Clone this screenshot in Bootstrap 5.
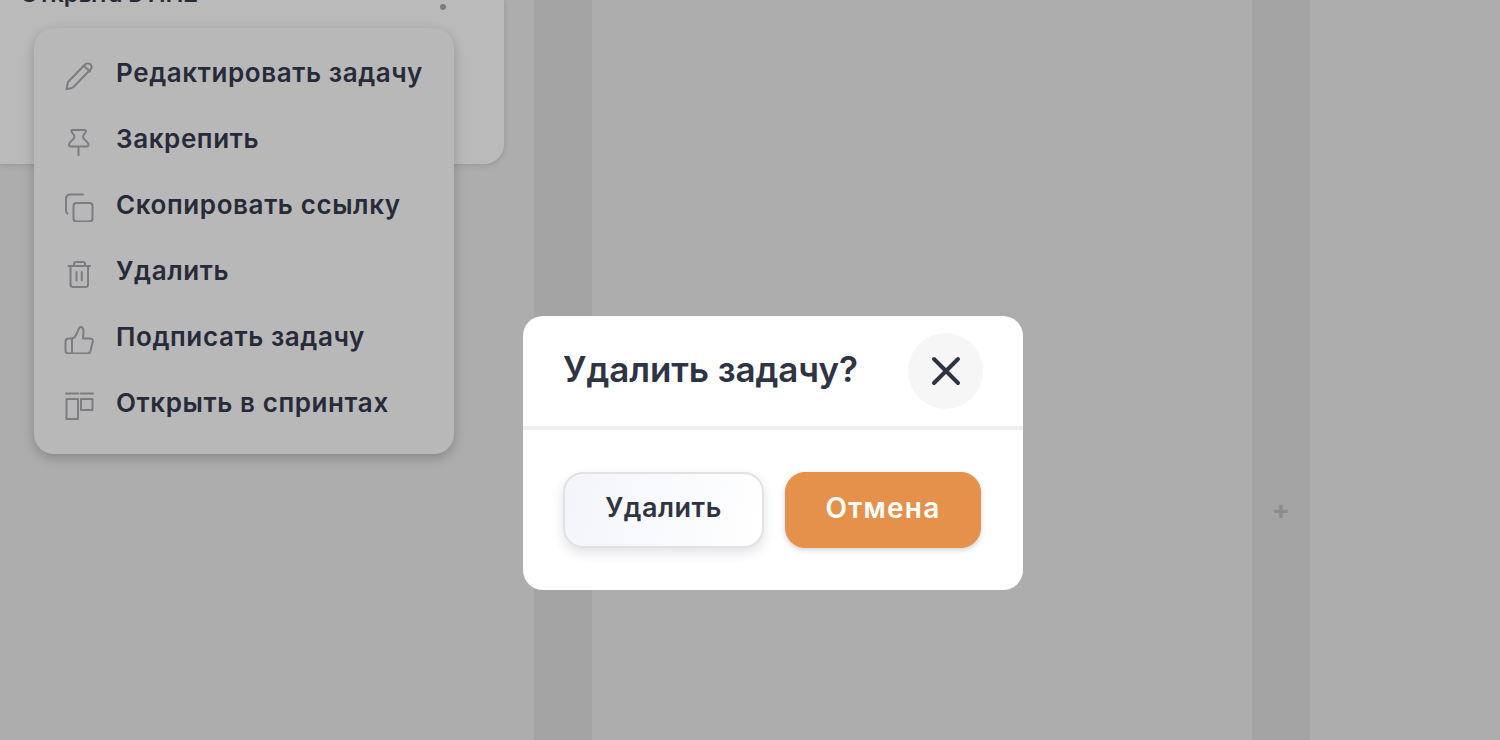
<!DOCTYPE html>
<html lang="ru">
  <head>
    <meta charset="UTF-8" />
    <title>Удалить задачу?</title>
    <link href="https://cdn.jsdelivr.net/npm/bootstrap@5.3.0/dist/css/bootstrap.min.css" rel="stylesheet" />
    <style>
      html, body { height: 100%; overflow: hidden; }
      body {
        background: #adadad;
        font-family: Inter, "Noto Sans", sans-serif;
        color: #272b39;
      }
      .board { height: 740px; }
      .board-first { width: 534px; }
      .board-strip { width: 58px; background: #a4a4a4; }
      .board-mid { width: 660px; }
      .task-panel {
        width: 504px;
        height: 164px;
        background: #bababa;
        border-bottom-right-radius: 20px;
        box-shadow: 0 1px 6px rgba(0,0,0,.14);
        position: relative;
      }
      .task-title {
        position: absolute;
        left: 20px;
        top: -19px;
        font-size: 24px;
        font-weight: 600;
        letter-spacing: -.15px;
        line-height: 26px;
        white-space: nowrap;
      }
      .task-dot {
        position: absolute;
        left: 440px;
        top: 4px;
        width: 6px;
        height: 6px;
        border-radius: 50%;
        background: #7d7d80;
      }
      .plus-mark { color: #8c8c8c; font-size: 27px; font-weight: 700; line-height: 1; margin-top: 496px; height: 27px; }
      .ctx-menu {
        position: absolute;
        left: 34px;
        top: 28px;
        width: 420px;
        height: 426px;
        padding-top: 13px;
        background: #b8b8b8;
        border-radius: 20px;
        box-shadow: 0 4px 12px rgba(0,0,0,.22);
      }
      .ctx-item {
        height: 66px;
        padding-left: 30px;
        gap: 21px;
        font-size: 26px;
        font-weight: 600;
        letter-spacing: .6px;
        white-space: nowrap;
      }
      .ctx-text { margin-top: -3px; }
      .ctx-icon { width: 31px; height: 31px; flex: none; fill: none; stroke: #7c7d82; stroke-width: 2; stroke-linecap: round; stroke-linejoin: round; }
      .confirm-box {
        position: absolute;
        left: 523px;
        top: 316px;
        width: 500px;
        height: 274px;
        background: #fff;
        border-radius: 20px;
      }
      .confirm-head {
        height: 114px;
        padding: 17px 40px 17px 40px;
        border-bottom: 4px solid #eeeeee;
      }
      .confirm-title { font-size: 35px; font-weight: 600; letter-spacing: -.1px; color: #2f3444; margin: 0 0 4px; white-space: nowrap; }
      .confirm-close {
        width: 75px;
        height: 76px;
        border: 0;
        border-radius: 50%;
        background: #f6f6f6;
        padding: 0;
      }
      .confirm-foot { padding: 42px 40px 0 40px; gap: 21px; }
      .confirm-btn {
        height: 76px;
        border-radius: 20px;
        font-size: 27px;
        font-weight: 600;
        padding: 0 0 4px;
      }
      .btn-remove {
        width: 201px;
        background: linear-gradient(100deg, #f3f5fa, #ffffff);
        border: 2px solid #e1e1e6;
        color: #2f3444;
        letter-spacing: .5px;
        box-shadow: 0 5px 12px rgba(50,50,90,.14);
      }
      .btn-cancel {
        width: 196px;
        background: #e6914b;
        border: 1px solid #e6914b;
        color: #fff;
        font-size: 28px;
        letter-spacing: 1.2px;
        box-shadow: 0 2px 5px rgba(50,50,90,.22);
      }
    </style>
  </head>
  <body>
    <div class="board d-flex">
      <div class="board-first">
        <div class="task-panel">
          <div class="task-title">Открыта в ПП2</div>
          <span class="task-dot"></span>
        </div>
      </div>
      <div class="board-strip"></div>
      <div class="board-mid"></div>
      <div class="board-strip d-flex justify-content-center"><span class="plus-mark">+</span></div>
      <div class="flex-grow-1"></div>
    </div>

    <div class="ctx-menu">
      <div class="ctx-item d-flex align-items-center">
        <svg class="ctx-icon" viewBox="0 0 31 31"><path d="M2.500 30l1.500-7L21 5.500c1.500-1.500 4-1.500 5.500 0s1.500 3.500 0 5L9.500 28c-2 1.500-5 2-7 2z"/><path d="M20 7l6 5.500"/></svg>
        <span class="ctx-text">Редактировать задачу</span>
      </div>
      <div class="ctx-item d-flex align-items-center">
        <svg class="ctx-icon" viewBox="0 0 31 31"><path d="M8 5h13c1 0 1 1.500.5 2.500-1 1.500-2.500 2.500-2.500 4.500 0 2.500 5 4 5.500 7.500.2 1-.5 2-1.500 2H6.500c-1 0-1.700-1-1.500-2C5.500 16 10.500 14.500 10.500 12c0-2-1.500-3-2.500-4.500C7.500 6.500 7 5 8 5z"/><path d="M14.500 22v9"/></svg>
        <span class="ctx-text">Закрепить</span>
      </div>
      <div class="ctx-item d-flex align-items-center">
        <svg class="ctx-icon" viewBox="0 0 31 31"><rect x="9.500" y="12" width="19" height="18.500" rx="3"/><path d="M19 3.500H6a4 4 0 0 0-4 4v12c0 1.500.5 2.500 1.500 3"/></svg>
        <span class="ctx-text">Скопировать ссылку</span>
      </div>
      <div class="ctx-item d-flex align-items-center">
        <svg class="ctx-icon" viewBox="0 0 31 31"><path d="M4.500 9H26M10 9V7a2 2 0 0 1 2-2h7a2 2 0 0 1 2 2v2M6.500 9v18.500a2.500 2.500 0 0 0 2.500 2.500h12.500a2.500 2.500 0 0 0 2.500-2.500V9M12.500 15v8.500M17.800 15v8.500"/></svg>
        <span class="ctx-text">Удалить</span>
      </div>
      <div class="ctx-item d-flex align-items-center">
        <svg class="ctx-icon" viewBox="0 0 31 31"><path d="M8 15.500H4.500a3 3 0 0 0-3 3v9a3 3 0 0 0 3 3H8"/><path d="M8 30.500v-15c3-.5 4-3 5.500-6.500 1-2.500 1.500-5 3-5 2 0 3 2 3 4.500 0 2.500-.5 4-.5 7H26c2 0 3.200 1.200 2.800 3l-2.300 9.500c-.4 1.500-1.300 2.500-3 2.500H8z"/></svg>
        <span class="ctx-text">Подписать задачу</span>
      </div>
      <div class="ctx-item d-flex align-items-center">
        <svg class="ctx-icon" viewBox="0 0 31 31"><path d="M2 4.500h12M16.500 4.500h12.500"/><rect x="2.500" y="10" width="11.500" height="20"/><rect x="17" y="10" width="11.500" height="11"/></svg>
        <span class="ctx-text">Открыть в спринтах</span>
      </div>
    </div>

    <div class="confirm-box">
      <div class="confirm-head d-flex align-items-center justify-content-between">
        <h5 class="confirm-title">Удалить задачу?</h5>
        <button type="button" class="confirm-close d-flex align-items-center justify-content-center" aria-label="Закрыть">
          <svg width="32" height="32" viewBox="0 0 32 32" fill="none" stroke="#2f3444" stroke-width="4" stroke-linecap="round"><path d="M4 4l24 24M28 4L4 28"/></svg>
        </button>
      </div>
      <div class="confirm-foot d-flex">
        <button type="button" class="btn confirm-btn btn-remove">Удалить</button>
        <button type="button" class="btn confirm-btn btn-cancel">Отмена</button>
      </div>
    </div>
  </body>
</html>
